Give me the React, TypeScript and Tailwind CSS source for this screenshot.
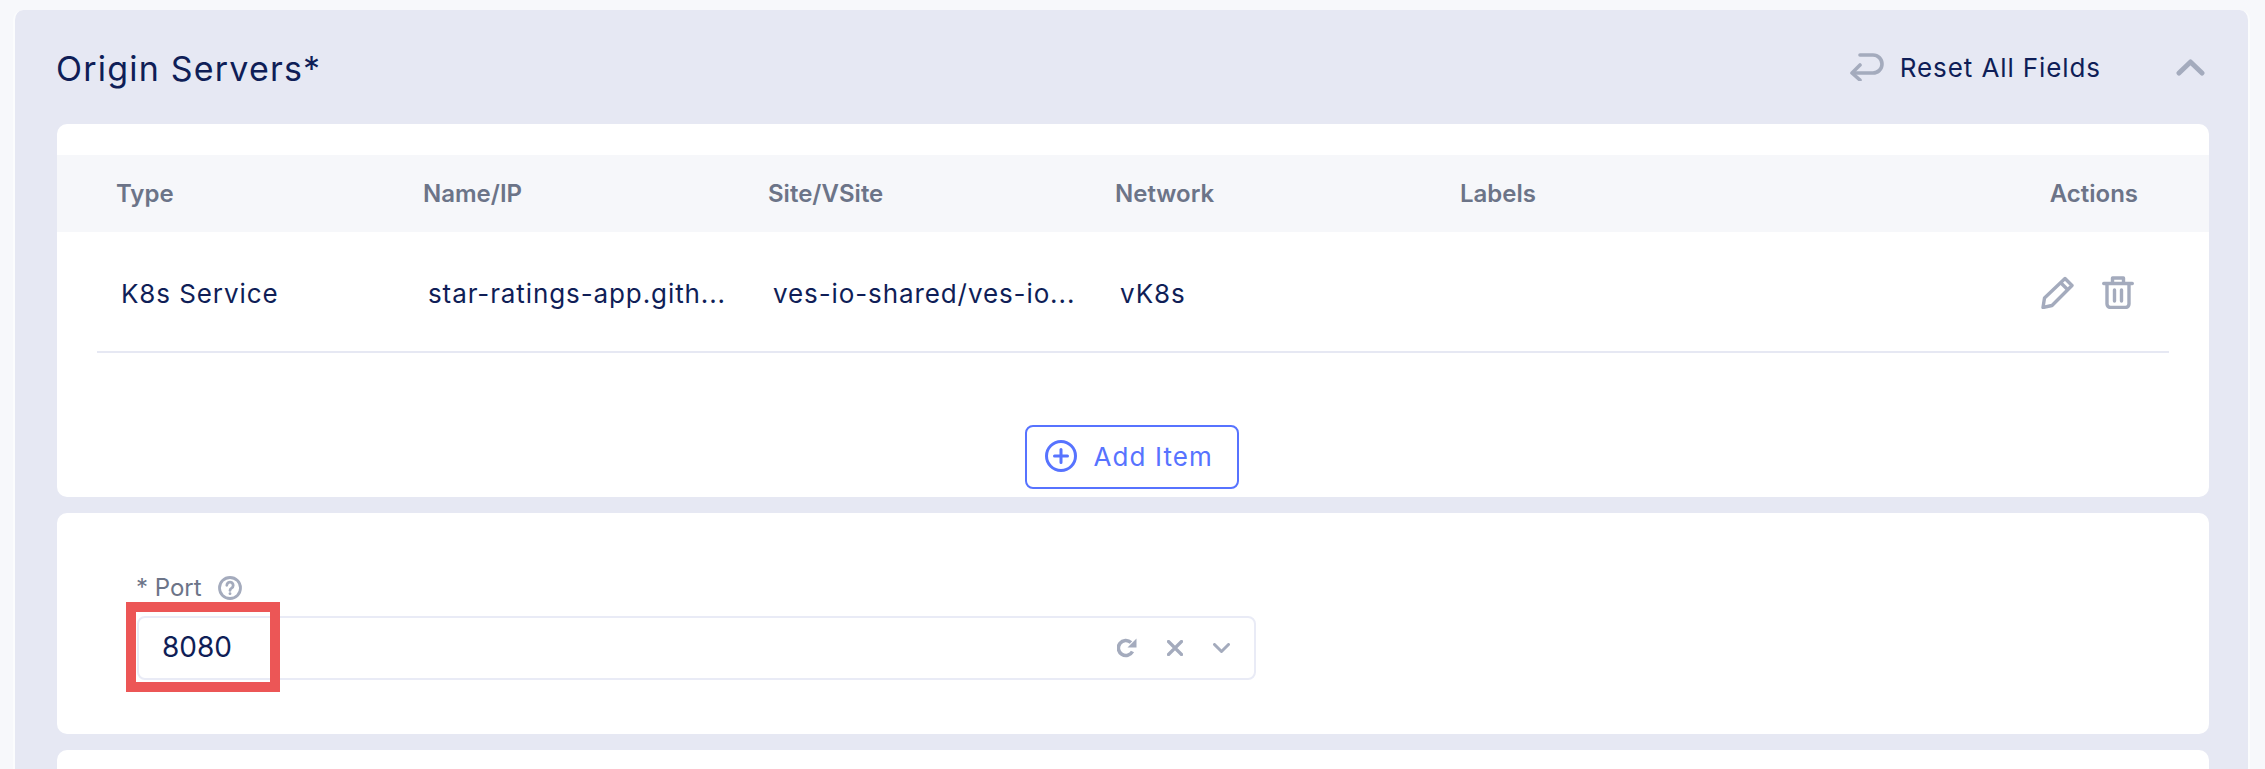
const headers = ["Type", "Name/IP", "Site/VSite", "Network", "Labels"];
const cells = ["K8s Service", "star-ratings-app.gith...", "ves-io-shared/ves-io...", "vK8s"];

const ResetIcon = () => (
  <svg width="34" height="28" viewBox="0 0 34 28" fill="none" stroke="#a4abbd" strokeWidth="3.600" strokeLinecap="round" strokeLinejoin="round">
    <path d="M10 2h13a9 9 0 0 1 0 18H3" />
    <path d="M10 12l-8 8 8 7" />
  </svg>
);

const ChevronUpIcon = () => (
  <svg width="29" height="18" viewBox="0 0 29 18" fill="none" stroke="#a4abbd" strokeWidth="5" strokeLinecap="round" strokeLinejoin="round">
    <path d="M3 15L14.500 4 26 15" />
  </svg>
);

const PencilIcon = () => (
  <svg width="33" height="33" viewBox="0 0 33 33" fill="none" stroke="#a4abbd" strokeWidth="3.400" strokeLinejoin="round">
    <path d="M24 2.500l7 7L11 29.500l-9 2 1.500-9.500z" />
    <path d="M20 7l7 7" />
  </svg>
);

const TrashIcon = () => (
  <svg width="32" height="33" viewBox="0 0 32 33" fill="none" stroke="#a4abbd" strokeWidth="3.400" strokeLinecap="round" strokeLinejoin="round">
    <path d="M1.700 7.500h28.600" />
    <path d="M10.500 7V2h11v5" />
    <path d="M5 8v20a3.500 3.500 0 0 0 3.500 3.500h15A3.500 3.500 0 0 0 27 28V8" />
    <path d="M12.500 14v11M19.500 14v11" />
  </svg>
);

const PlusCircleIcon = () => (
  <svg width="32" height="32" viewBox="0 0 32 32" fill="none" stroke="#5773ff" strokeWidth="3" strokeLinecap="round">
    <circle cx="16" cy="16" r="14.500" />
    <path d="M16 9.500v13M9.500 16h13" />
  </svg>
);

const HelpIcon = () => (
  <svg width="24" height="24" viewBox="0 0 24 24" fill="none" stroke="#a4abbd" strokeWidth="2.800" strokeLinecap="round">
    <circle cx="12" cy="12" r="10.500" />
    <path d="M8.800 9.300a3.200 3.200 0 1 1 4.800 2.800c-1 .6-1.600 1.200-1.600 2.300" />
    <path d="M12 17.600v.1" />
  </svg>
);

const RefreshIcon = () => (
  <svg width="20" height="20" viewBox="0 0 20 20" fill="none">
    <path d="M15.500 13.500A7.500 7.500 0 1 1 14 4.500" stroke="#a4abbd" strokeWidth="3.600" />
    <path d="M19.500 0.500v9h-9z" fill="#a4abbd" />
  </svg>
);

const CloseIcon = () => (
  <svg width="16" height="16" viewBox="0 0 16 16" fill="none" stroke="#a4abbd" strokeWidth="3.200" strokeLinecap="round">
    <path d="M1.500 1.500l13 13M14.500 1.500l-13 13" />
  </svg>
);

const ChevronDownIcon = () => (
  <svg width="17" height="10" viewBox="0 0 17 10" fill="none" stroke="#a4abbd" strokeWidth="3" strokeLinecap="round" strokeLinejoin="round">
    <path d="M1.500 1.500l7 7 7-7" />
  </svg>
);

export default function App() {
  return (
    <div className="h-[769px] w-[2265px] overflow-hidden bg-[#f7f8fb] pt-[10px] pr-[15px] pl-[13px] font-['Inter',sans-serif] text-[#0f1e57]">
      <div className="h-[759px] rounded-t-[10px] border-x-2 border-[#fbfcfd] bg-[#e6e8f3]">
        <div className="flex h-[114px] items-center pr-[43px] pl-[41px]">
          <h2 className="pt-[2px] text-[34px] font-normal tracking-[1.2px]">Origin Servers*</h2>
          <button className="ml-auto flex items-center gap-[16px] text-[26px] tracking-[0.9px]">
            <ResetIcon />
            Reset All Fields
          </button>
          <button className="ml-[75px]">
            <ChevronUpIcon />
          </button>
        </div>

        <div className="flex flex-col gap-[16px] pr-[39px] pl-[42px]">
          <section className="h-[373px] rounded-[10px] bg-white pt-[31px]">
            <div className="grid h-[77px] grid-cols-[307px_345px_347px_345px_1fr_auto] items-center bg-[#f6f7fa] pr-[71px] pl-[59px] text-[24px] font-semibold text-[#6c7488]">
              {headers.map((label) => (
                <span key={label}>{label}</span>
              ))}
              <span className="text-right">Actions</span>
            </div>
            <div className="mx-[40px] grid h-[121px] grid-cols-[307px_345px_347px_345px_1fr] items-center border-b-2 border-[#e6e8f3] pt-[3px] pr-[35px] pl-[24px] text-[26px] tracking-[0.9px]">
              {cells.map((value) => (
                <span key={value}>{value}</span>
              ))}
              <span className="flex justify-end gap-[28px] pb-[2px]">
                <PencilIcon />
                <TrashIcon />
              </span>
            </div>
            <div className="flex justify-center pt-[72px] pr-[3px]">
              <button className="flex h-[64px] w-[214px] items-center gap-[17px] rounded-[8px] border-2 border-[#5773ff] pb-[2px] pl-[18px] text-[26px] tracking-[1.1px] text-[#5773ff]">
                <PlusCircleIcon />
                Add Item
              </button>
            </div>
          </section>

          <section className="h-[221px] rounded-[10px] bg-white pt-[63px] pl-[80px]">
            <div className="-ml-px flex h-[24px] items-center gap-[16px] text-[24px] text-[#6c7488]">
              * Port
              <HelpIcon />
            </div>
            <div className="relative mt-[16px] flex h-[64px] w-[1119px] items-center gap-[30px] rounded-[8px] border-2 border-[#e9ebf6] pr-[24px] pl-[23px]">
              <span className="mr-auto pb-[2px] text-[28px]">8080</span>
              <RefreshIcon />
              <CloseIcon />
              <ChevronDownIcon />
              <div className="absolute top-[-16px] left-[-13px] h-[90px] w-[154px] border-[10px] border-[#ec5656]" />
            </div>
          </section>

          <section className="h-[60px] rounded-t-[10px] bg-white" />
        </div>
      </div>
    </div>
  );
}
